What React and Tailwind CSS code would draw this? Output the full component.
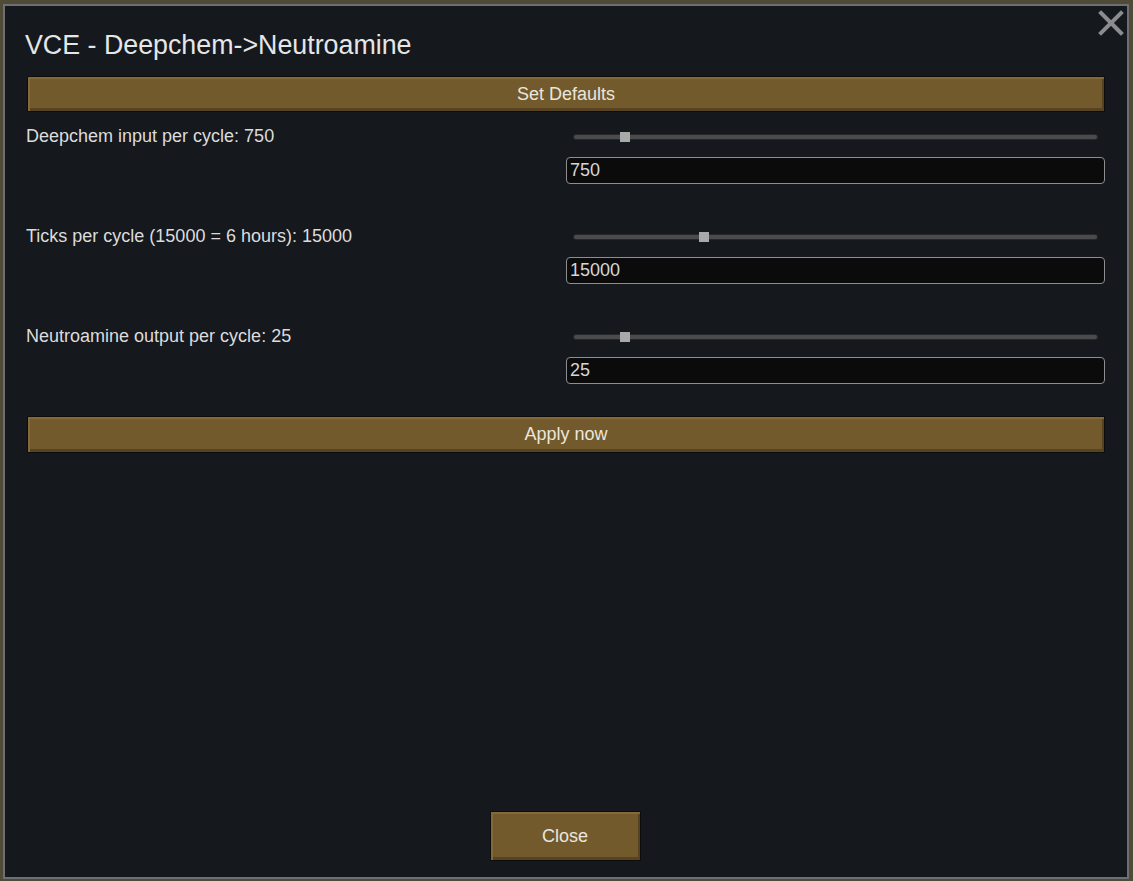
import React from "react";

const font = { fontFamily: '"Liberation Sans", Arial, sans-serif' };

function BrownButton({ children, className = "" }) {
  return (
    <div
      className={
        "flex items-center justify-center border border-[#0d0d0d] bg-[#725a2d] text-[18px] text-[#ebe6dc] shadow-[inset_2px_2px_0_#846839,inset_-2px_-3px_0_#574321] " +
        className
      }
    >
      {children}
    </div>
  );
}

function SettingRow({ label, value, pct }) {
  return (
    <div className="flex">
      <div className="-ml-px w-[540px] pt-px text-[18px] leading-[20px] text-[#dcdcdc]">{label}</div>
      <div className="flex flex-1 flex-col">
        <div className="relative mx-[8px] mt-[10px] h-[4px] rounded-[2px] bg-[#4a4b4c] shadow-[0_0_0_1px_#26282a]">
          <div
            className="absolute top-[-3px] h-[10px] w-[10px] bg-[#a9a9a9]"
            style={{ left: `calc(${pct}% - 5px)` }}
          />
        </div>
        <div className="mt-[18px] flex h-[27px] items-center rounded-[4px] border border-[#8e8e8e] bg-[#0b0b0c] pl-[3px] text-[18px] text-[#d6d6d6]">
          {value}
        </div>
      </div>
    </div>
  );
}

export default function App() {
  return (
    <div className="h-[881px] w-[1133px] bg-[#4f4b36] pl-[3px] pt-[4px]" style={font}>
      <div className="relative flex h-[875px] w-[1126px] flex-col border-2 border-[#6d7073] bg-[#15181c] px-[22px]">
        <svg
          className="absolute right-[3px] top-[4px]"
          width="26"
          height="26"
          viewBox="0 0 26 26"
        >
          <path d="M3 3 L23 23 M23 3 L3 23" stroke="#8a8c8e" strokeWidth="4" strokeLinecap="square" />
        </svg>
        <div className="mt-[25px] -ml-[2px] h-[28px] text-[26.8px] leading-[28px] text-[#e4e6e8]">
          VCE - Deepchem-&gt;Neutroamine
        </div>
        <BrownButton className="mt-[17px] h-[36px]">Set Defaults</BrownButton>
        <div className="mt-[13px] flex flex-col gap-[41px]">
          <SettingRow label="Deepchem input per cycle: 750" value="750" pct={9.8} />
          <SettingRow label="Ticks per cycle (15000 = 6 hours): 15000" value="15000" pct={24.9} />
          <SettingRow label="Neutroamine output per cycle: 25" value="25" pct={9.8} />
        </div>
        <BrownButton className="mt-[32px] h-[37px]">Apply now</BrownButton>
        <div className="flex-1" />
        <div className="mb-[16px] flex justify-center">
          <BrownButton className="-ml-[2px] h-[50px] w-[151px] text-[17px]">Close</BrownButton>
        </div>
      </div>
    </div>
  );
}
